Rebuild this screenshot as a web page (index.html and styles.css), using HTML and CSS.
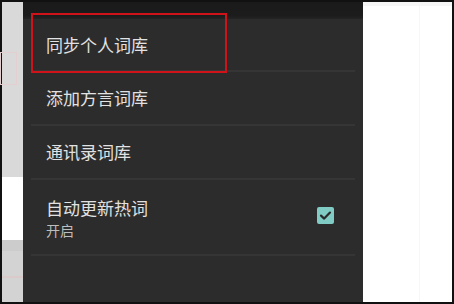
FILE: index.html
```html
<!DOCTYPE html>
<html lang="zh">
<head>
<meta charset="utf-8">
<link rel="stylesheet" href="styles.css">
</head>
<body>
<div class="frame">
  <div class="left-strip">
    <div class="ls-top"><div class="ghost-box"></div></div>
    <div class="ls-white"></div>
    <div class="ls-bottom"><div class="ls-band"></div><div class="ls-pink"></div></div>
  </div>
  <div class="panel">
    <div class="topbar"></div>
    <ul class="list">
      <li class="item"><span class="title">同步个人词库</span></li>
      <li class="item"><span class="title">添加方言词库</span></li>
      <li class="item"><span class="title">通讯录词库</span></li>
      <li class="item item-tall">
        <div class="texts">
          <span class="title">自动更新热词</span>
          <span class="summary">开启</span>
        </div>
        <span class="checkbox">
          <svg viewBox="0 0 17 17" width="17" height="17"><path d="M4 8.6 L7.2 11.6 L13 5.6" fill="none" stroke="#2b2b2b" stroke-width="2.2" stroke-linecap="round" stroke-linejoin="round"/></svg>
        </span>
      </li>
    </ul>
    <div class="highlight"></div>
  </div>
  <div class="right-area"><div class="right-line"></div></div>
</div>
</body>
</html>
```

FILE: styles.css
```css
html, body {
  margin: 0;
  padding: 0;
  background: #111111;
}
body {
  width: 454px;
  height: 304px;
  overflow: hidden;
  font-family: "Noto Sans CJK SC", "Noto Sans", sans-serif;
}
.frame {
  margin: 2px;
  width: 450px;
  height: 300px;
  display: flex;
}
.left-strip {
  width: 21px;
  display: flex;
  flex-direction: column;
}
.ls-top {
  height: 175px;
  background: #d9d9d9;
  position: relative;
}
.ghost-box {
  position: absolute;
  left: -2px;
  top: 50px;
  width: 15px;
  height: 31px;
  border: 1px solid #e3cfd0;
}
.ls-white {
  height: 63px;
  background: #ffffff;
}
.ls-bottom {
  flex: 1;
  background: #d3d3d3;
  position: relative;
}
.ls-band {
  height: 11px;
  background: #cccccc;
}
.ls-pink {
  position: absolute;
  left: 0;
  right: 0;
  top: 36px;
  height: 2px;
  background: #dacacb;
}
.panel {
  width: 340px;
  background: #2c2c2c;
  position: relative;
}
.topbar {
  height: 17px;
  background: linear-gradient(#1a1a1a, #1c1c1c 80%, #242424);
}
.list {
  list-style: none;
  margin: 0;
  padding: 0 8px;
}
.item {
  height: 52px;
  border-bottom: 2px solid #353535;
  display: flex;
  align-items: center;
  padding-left: 15px;
  padding-right: 21px;
}
.item:nth-child(1) {
  height: 51px;
}
.item-tall {
  height: 74px;
  justify-content: space-between;
  align-items: flex-start;
}
.texts {
  display: flex;
  flex-direction: column;
  padding-top: 17px;
}
.title {
  color: #e2e2e2;
  font-size: 17px;
  line-height: 22px;
}
.summary {
  color: #bdbdbd;
  font-size: 14px;
  line-height: 20px;
  margin-top: 1px;
}
.checkbox {
  width: 17px;
  height: 17px;
  margin-top: 27px;
  background: #80cbc4;
  border-radius: 2px;
  display: flex;
}
.highlight {
  position: absolute;
  left: 8px;
  top: 11px;
  width: 192px;
  height: 56px;
  border: 2px solid #d0121b;
}
.right-area {
  flex: 1;
  background: #ffffff;
  position: relative;
  border-top: 4px solid #f6f6f6;
}
.right-line {
  position: absolute;
  left: 56px;
  top: 0;
  bottom: 0;
  width: 1px;
  background: #f7f7f7;
}
```
